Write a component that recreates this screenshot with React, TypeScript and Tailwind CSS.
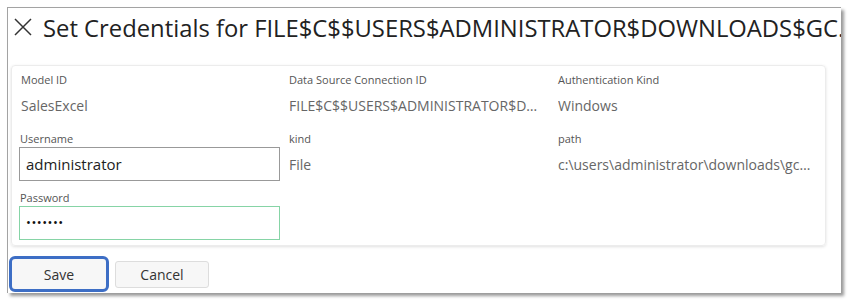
import React from 'react';

const Field: React.FC<{ label: string; value: string }> = ({ label, value }) => (
  <div className="min-w-0 pl-[9px] pr-[10px]">
    <div className="h-[20px] text-[11px] leading-[20px] text-[#555]">{label}</div>
    <div className="mt-[6px] h-[20px] truncate text-[14px] leading-[20px] text-[#666]">{value}</div>
  </div>
);

const App: React.FC = () => {
  return (
    <div className="h-[305px] w-[854px] bg-white pl-[7px] pt-[7px] font-['Open_Sans',sans-serif]">
      <div className="relative h-[286px] w-[834px] overflow-hidden border-l border-t border-[#a3a3a3] bg-white shadow-[3px_3px_3px_rgba(0,0,0,0.4)]">
        {/* header */}
        <div className="flex h-[57px] items-start whitespace-nowrap pt-[6px]">
          <svg className="ml-[6px] mt-[4px] shrink-0" width="18" height="18" viewBox="0 0 18 18">
            <path d="M1 1 L17 17 M17 1 L1 17" stroke="#333" strokeWidth="1.5" fill="none" />
          </svg>
          <h1 className="ml-[11px] text-[23.8px] leading-[28px] text-[#222]">
            Set Credentials for FILE$C$$USERS$ADMINISTRATOR$DOWNLOADS$GC.XLSX
          </h1>
        </div>

        {/* card */}
        <div className="ml-[3px] h-[181px] w-[815px] rounded-[4px] border border-[#ececec] shadow-[0_1px_3px_rgba(0,0,0,0.12)]">
          <div className="grid grid-cols-[268px_269px_1fr] pt-[4px]">
            <Field label="Model ID" value="SalesExcel" />
            <Field label="Data Source Connection ID" value="FILE$C$$USERS$ADMINISTRATOR$DOWNLOADS$GC.XLSX" />
            <Field label="Authentication Kind" value="Windows" />
          </div>

          <div className="mt-[16px] grid grid-cols-[268px_269px_1fr]">
            <div className="pl-[7px]">
              <div className="pl-[1px] text-[11px] leading-[14px] text-[#555]">Username</div>
              <div className="mt-[1px] flex h-[34px] w-[261px] items-center border border-[#999] px-[6px] text-[15px] text-[#222]">
                administrator
              </div>
            </div>
            <div className="min-w-0 pl-[9px]">
              <div className="text-[11px] leading-[14px] text-[#555]">kind</div>
              <div className="mt-[1px] flex h-[34px] items-center text-[14px] text-[#666]">File</div>
            </div>
            <div className="min-w-0 pl-[9px] pr-[10px]">
              <div className="text-[11px] leading-[14px] text-[#555]">path</div>
              <div className="mt-[1px] flex h-[34px] items-center text-[14px] text-[#666]">
                <span className="truncate">c:\users\administrator\downloads\gcsales.xlsx</span>
              </div>
            </div>
          </div>

          <div className="mt-[10px] pl-[7px]">
            <div className="pl-[1px] text-[11px] leading-[14px] text-[#555]">Password</div>
            <div className="mt-[1px] flex h-[34px] w-[261px] items-center border border-[#86d4a6] px-[6px] text-[13px] tracking-[0.5px] text-[#111]">
              •••••••
            </div>
          </div>
        </div>

        {/* buttons */}
        <div className="ml-[1px] mt-[10px] flex items-center gap-[6px]">
          <button className="h-[36px] w-[100px] rounded-[6px] border-[3px] border-[#3d6ec5] bg-[#f7f7f7] text-[14px] text-[#333]">
            Save
          </button>
          <button className="h-[27px] w-[94px] rounded-[3px] border border-[#ddd] bg-[#f7f7f7] text-[14px] text-[#333]">
            Cancel
          </button>
        </div>
      </div>
    </div>
  );
};

export default App;
